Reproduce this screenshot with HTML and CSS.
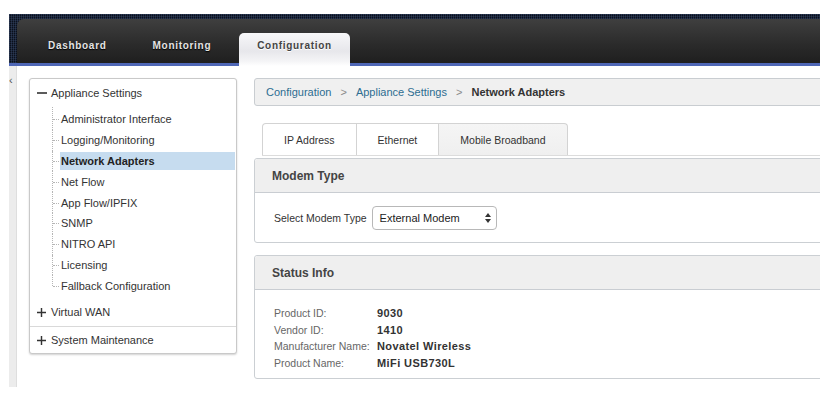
FILE: index.html
```html
<!DOCTYPE html>
<html lang="en">
<head>
<meta charset="utf-8">
<title>Network Adapters</title>
<link rel="stylesheet" href="styles.css">
</head>
<body>
<div class="app">
  <header class="topbar">
    <div class="topbar-inner">
      <nav class="main-tabs">
        <a class="main-tab">Dashboard</a>
        <a class="main-tab">Monitoring</a>
        <a class="main-tab active">Configuration</a>
      </nav>
    </div>
  </header>

  <div class="main">
    <aside class="strip"><span class="collapse">‹</span></aside>

    <div class="sidebar">
      <div class="side-head">
        <svg class="toggle" viewBox="0 0 10 10" width="10" height="10"><path d="M0 5H10" stroke="#333" stroke-width="1.6"/></svg>
        <span>Appliance Settings</span>
      </div>
      <ul class="tree">
        <li><span class="item">Administrator Interface</span></li>
        <li><span class="item">Logging/Monitoring</span></li>
        <li><span class="item active">Network Adapters</span></li>
        <li><span class="item">Net Flow</span></li>
        <li><span class="item">App Flow/IPFIX</span></li>
        <li><span class="item">SNMP</span></li>
        <li><span class="item">NITRO API</span></li>
        <li><span class="item">Licensing</span></li>
        <li><span class="item">Fallback Configuration</span></li>
      </ul>
      <div class="side-row sep">
        <svg class="toggle plus" viewBox="0 0 10 10" width="9" height="9"><path d="M0 5H10M5 0V10" stroke="#333" stroke-width="1.6"/></svg>
        <span>Virtual WAN</span>
      </div>
      <div class="side-row last">
        <svg class="toggle plus" viewBox="0 0 10 10" width="9" height="9"><path d="M0 5H10M5 0V10" stroke="#333" stroke-width="1.6"/></svg>
        <span>System Maintenance</span>
      </div>
    </div>

    <section class="content">
      <div class="breadcrumb">
        <a class="crumb-link">Configuration</a>
        <span class="crumb-sep">&gt;</span>
        <a class="crumb-link">Appliance Settings</a>
        <span class="crumb-sep">&gt;</span>
        <span class="crumb-current">Network Adapters</span>
      </div>

      <div class="tabs">
        <div class="tab first">IP Address</div>
        <div class="tab">Ethernet</div>
        <div class="tab last active">Mobile Broadband</div>
      </div>

      <div class="panel">
        <div class="panel-head">Modem Type</div>
        <div class="panel-body modem">
          <span class="field-label">Select Modem Type</span>
          <div class="select">
            <span>External Modem</span>
            <svg class="select-arrows" viewBox="0 0 6 10" width="6" height="10"><path d="M0 4L3 0L6 4Z M0 6L3 10L6 6Z" fill="#333"/></svg>
          </div>
        </div>
      </div>

      <div class="panel status">
        <div class="panel-head">Status Info</div>
        <div class="panel-body info">
          <span class="info-label">Product ID:</span><span class="info-value">9030</span>
          <span class="info-label">Vendor ID:</span><span class="info-value">1410</span>
          <span class="info-label">Manufacturer Name:</span><span class="info-value">Novatel Wireless</span>
          <span class="info-label">Product Name:</span><span class="info-value">MiFi USB730L</span>
        </div>
      </div>
    </section>
  </div>
</div>
</body>
</html>
```

FILE: styles.css
```css
html, body {
  margin: 0;
  padding: 0;
  overflow: hidden;
  background: #fff;
  font-family: "Liberation Sans", Arial, sans-serif;
  font-size: 11px;
  color: #333;
}

.app {
  padding-top: 14px;
  padding-left: 9px;
}

/* ---------- top bar ---------- */
.topbar {
  height: 52px;
  box-sizing: border-box;
  padding-top: 5px;
  background-color: #0a101c;
  background-image:
    repeating-linear-gradient(90deg, rgba(70, 90, 130, 0.35) 0 1px, transparent 1px 2px),
    repeating-linear-gradient(0deg, rgba(70, 90, 130, 0.25) 0 1px, transparent 1px 2px);
  border-bottom: 3px solid #4f67b6;
}

.topbar-inner {
  margin-left: 8px;
  height: 44px;
  border-radius: 7px 0 0 0;
  background: linear-gradient(#3f3f3f, #2a2a2a 60%, #1f1f1f);
  display: flex;
  align-items: flex-end;
  padding-left: 13px;
}

.main-tabs {
  display: flex;
  gap: 10px;
  align-items: flex-end;
}

.main-tab {
  height: 33px;
  box-sizing: border-box;
  padding: 6px 18px 0;
  margin-bottom: -3px;
  font-weight: bold;
  font-size: 10px;
  line-height: 13px;
  letter-spacing: 0.7px;
  color: #e4e4e4;
  text-shadow: 0 1px 1px #000;
}

.main-tab.active {
  color: #444;
  text-shadow: 0 1px 0 #fff;
  border-radius: 5px 5px 0 0;
  background: linear-gradient(#f7f7f9, #e7e7eb 55%, #f4f4f6 85%, #ffffff);
}

/* ---------- main ---------- */
.main {
  display: flex;
  align-items: flex-start;
}

.strip {
  width: 8px;
  height: 321px;
  box-sizing: border-box;
  background: #ececec;
  border-right: 1px solid #dedede;
  position: relative;
}

.collapse {
  position: absolute;
  left: 0;
  top: 9px;
  font-size: 11px;
  line-height: 11px;
  color: #555;
}

/* ---------- sidebar ---------- */
.sidebar {
  margin: 12px 0 0 12px;
  width: 208px;
  box-sizing: border-box;
  border: 1px solid #c9c9c9;
  border-radius: 3px;
  box-shadow: 0 1px 2px rgba(0, 0, 0, 0.18);
  background: #fff;
}

.side-head,
.side-row {
  display: flex;
  align-items: center;
  padding-left: 7px;
  height: 28px;
  color: #333;
}

.toggle {
  margin-right: 4px;
  flex: none;
}

.toggle.plus {
  margin-right: 5px;
}

.side-row.sep {
  border-bottom: 1px solid #d9d9d9;
}

.side-row.last {
  height: 26px;
}

.tree {
  list-style: none;
  margin: 0 0 0 22px;
  padding: 2px 0 2px 0;
}

.tree li {
  position: relative;
  height: 20.8px;
  padding-left: 8px;
  display: flex;
  align-items: center;
}

.tree li::before {
  content: "";
  position: absolute;
  left: 0;
  top: 0;
  bottom: 0;
  border-left: 1px dotted #b5b5b5;
}

.tree li:first-child::before {
  top: -2px;
}

.tree li:last-child::before {
  bottom: 50%;
}

.tree li::after {
  content: "";
  position: absolute;
  left: 1px;
  top: 50%;
  width: 6px;
  border-top: 1px dotted #b5b5b5;
}

.item {
  flex: 1;
  height: 18px;
  line-height: 18px;
  padding-left: 1px;
  margin-right: 1px;
  color: #333;
}

.item.active {
  background: #c6dcef;
  font-weight: bold;
  color: #222;
}

/* ---------- content ---------- */
.content {
  flex: 1;
  margin: 12px -10px 0 17px;
}

.breadcrumb {
  height: 28px;
  box-sizing: border-box;
  border: 1px solid #c9cdd1;
  border-radius: 3px;
  background: #f0f0f0;
  display: flex;
  align-items: center;
  padding-left: 11px;
}

.crumb-link {
  color: #2d6d90;
}

.crumb-sep {
  color: #8a8a8a;
  margin: 0 9px;
}

.crumb-current {
  font-weight: bold;
  color: #333;
}

.tabs {
  display: flex;
  margin: 17px 0 0 8px;
  border-bottom: 1px solid #dcdcdc;
}

.tab {
  height: 32px;
  box-sizing: border-box;
  line-height: 33px;
  padding: 0 21px;
  font-size: 10.5px;
  border: 1px solid #d3d3d3;
  border-left: none;
  border-bottom: none;
  background: #fff;
  color: #333;
}

.tab.first {
  border-left: 1px solid #d3d3d3;
  border-radius: 4px 0 0 0;
}

.tab.last {
  border-radius: 0 4px 0 0;
}

.tab.active {
  background: linear-gradient(#f5f5f5, #efefef);
}

.panel {
  margin-top: 2px;
  border: 1px solid #cbcfd3;
  border-radius: 3px;
  background: #fff;
}

.panel.status {
  margin-top: 12px;
}

.panel-head {
  height: 34px;
  box-sizing: border-box;
  background: #efefef;
  border-bottom: 1px solid #c9cdd2;
  border-radius: 3px 0 0 0;
  display: flex;
  align-items: center;
  padding-left: 17px;
  font-weight: bold;
  font-size: 12px;
  color: #444;
}

.panel-body.modem {
  height: 49px;
  display: flex;
  align-items: center;
  padding-left: 19px;
}

.field-label {
  font-size: 10.5px;
  color: #333;
  margin-right: 5px;
}

.select {
  width: 125px;
  height: 24px;
  box-sizing: border-box;
  border: 1px solid #b8b8b8;
  border-radius: 4px;
  background: #fff;
  display: flex;
  align-items: center;
  justify-content: space-between;
  padding: 0 5px 0 7px;
  color: #222;
}

.panel-body.info {
  display: grid;
  grid-template-columns: 103px auto;
  grid-auto-rows: 16.6px;
  align-items: center;
  padding: 15px 0 7px 19px;
}

.info-label {
  font-size: 10.5px;
  color: #666;
}

.info-value {
  font-weight: bold;
  letter-spacing: 0.4px;
  color: #333;
}
```
